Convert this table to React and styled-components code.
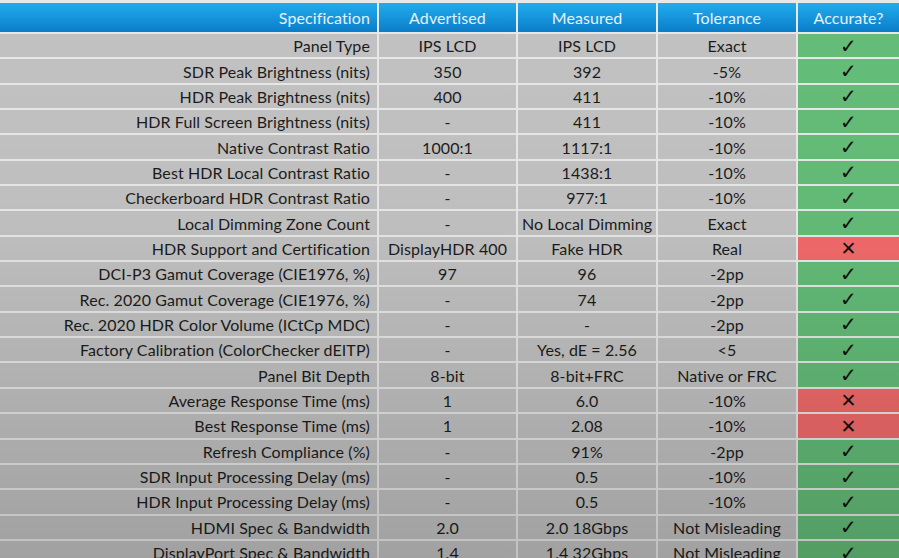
import React from "react";
import styled, { createGlobalStyle } from "styled-components";

const rows = [
  ["Panel Type", "IPS LCD", "IPS LCD", "Exact", true],
  ["SDR Peak Brightness (nits)", "350", "392", "-5%", true],
  ["HDR Peak Brightness (nits)", "400", "411", "-10%", true],
  ["HDR Full Screen Brightness (nits)", "-", "411", "-10%", true],
  ["Native Contrast Ratio", "1000:1", "1117:1", "-10%", true],
  ["Best HDR Local Contrast Ratio", "-", "1438:1", "-10%", true],
  ["Checkerboard HDR Contrast Ratio", "-", "977:1", "-10%", true],
  ["Local Dimming Zone Count", "-", "No Local Dimming", "Exact", true],
  ["HDR Support and Certification", "DisplayHDR 400", "Fake HDR", "Real", false],
  ["DCI-P3 Gamut Coverage (CIE1976, %)", "97", "96", "-2pp", true],
  ["Rec. 2020 Gamut Coverage (CIE1976, %)", "-", "74", "-2pp", true],
  ["Rec. 2020 HDR Color Volume (ICtCp MDC)", "-", "-", "-2pp", true],
  ["Factory Calibration (ColorChecker dEITP)", "-", "Yes, dE = 2.56", "<5", true],
  ["Panel Bit Depth", "8-bit", "8-bit+FRC", "Native or FRC", true],
  ["Average Response Time (ms)", "1", "6.0", "-10%", false],
  ["Best Response Time (ms)", "1", "2.08", "-10%", false],
  ["Refresh Compliance (%)", "-", "91%", "-2pp", true],
  ["SDR Input Processing Delay (ms)", "-", "0.5", "-10%", true],
  ["HDR Input Processing Delay (ms)", "-", "0.5", "-10%", true],
  ["HDMI Spec & Bandwidth", "2.0", "2.0 18Gbps", "Not Misleading", true],
  ["DisplayPort Spec & Bandwidth", "1.4", "1.4 32Gbps", "Not Misleading", true],
];

const headers = ["Specification", "Advertised", "Measured", "Tolerance", "Accurate?"];

const App = () => {
  return (
    <>
      <GlobalStyle />
      <Wrap>
        <Table>
          {headers.map((h, i) => (
            <HeadCell key={h} $right={i === 0}>
              {h}
            </HeadCell>
          ))}
          {rows.map(([spec, adv, meas, tol, ok]) => (
            <React.Fragment key={spec}>
              <Cell $right>{spec}</Cell>
              <Cell>{adv}</Cell>
              <Cell>{meas}</Cell>
              <Cell>{tol}</Cell>
              <Verdict $ok={ok}>{ok ? "✓" : "✕"}</Verdict>
            </React.Fragment>
          ))}
        </Table>
        <Shade />
      </Wrap>
    </>
  );
};

const GlobalStyle = createGlobalStyle`
  html, body {
    margin: 0;
    padding: 0;
    background: #e9e9e9;
    overflow: hidden;
  }
`;

const Wrap = styled.div`
  position: relative;
  width: 899px;
  height: 558px;
  overflow: hidden;
`;

const Table = styled.div`
  display: grid;
  grid-template-columns: 377px 137px 138px 138px 1fr;
  grid-template-rows: 29px;
  grid-auto-rows: 23.35px;
  gap: 2px;
  padding-top: 3px;
  background: #e8e8e8;
  font-family: Lato, "Liberation Sans", sans-serif;
  font-size: 16px;
  letter-spacing: 0.1px;
`;

const HeadCell = styled.div`
  display: flex;
  align-items: center;
  justify-content: ${(p) => (p.$right ? "flex-end" : "center")};
  padding: 0 7px;
  background: linear-gradient(#22acec, #0a7dca);
  color: #e4f3ff;
`;

const Cell = styled.div`
  display: flex;
  align-items: center;
  justify-content: ${(p) => (p.$right ? "flex-end" : "center")};
  padding: 0 7px;
  background: #c2c2c2;
  color: #1c1c1c;
  white-space: nowrap;
`;

const Verdict = styled.div`
  display: flex;
  align-items: center;
  justify-content: center;
  background: ${(p) => (p.$ok ? "#64bd78" : "#f36b6b")};
  color: #111;
  font-family: "DejaVu Sans", sans-serif;
  font-size: ${(p) => (p.$ok ? "20px" : "19px")};
  font-weight: bold;
`;

const Shade = styled.div`
  position: absolute;
  inset: 0;
  pointer-events: none;
  background: linear-gradient(
    rgba(0, 0, 0, 0) 0%,
    rgba(0, 0, 0, 0.02) 40%,
    rgba(0, 0, 0, 0.17) 100%
  );
`;

export default App;
